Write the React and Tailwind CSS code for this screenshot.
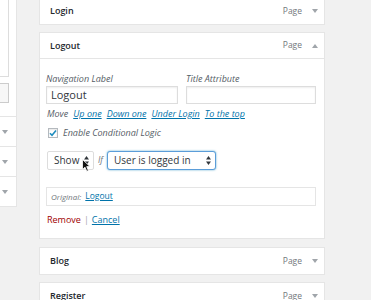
import React from "react";

const font = { fontFamily: '"Open Sans", "Liberation Sans", sans-serif' };

function Down({ className = "" }) {
  return (
    <svg width="6" height="4" viewBox="0 0 6 4" className={className}>
      <polygon points="0,0 6,0 3,4" fill="#a0a5aa" />
    </svg>
  );
}
function Up({ className = "" }) {
  return (
    <svg width="6" height="4" viewBox="0 0 6 4" className={className}>
      <polygon points="0,4 6,4 3,0" fill="#a0a5aa" />
    </svg>
  );
}
function UpDown() {
  return (
    <svg width="5" height="9" viewBox="0 0 5 9">
      <polygon points="0,3.5 5,3.5 2.5,0" fill="#32373c" />
      <polygon points="0,5.5 5,5.5 2.5,9" fill="#32373c" />
    </svg>
  );
}

function Header({ title, open = false }) {
  return (
    <div className={`h-[26px] flex items-center justify-between pl-[10px] pr-[6px] ${open ? "border-b border-[#e5e5e5]" : ""}`}>
      <span className="text-[9px] font-semibold text-[#23282d]">{title}</span>
      <span className="flex items-center gap-[10px]">
        <span className="text-[8.5px] text-[#72777c]">Page</span>
        {open ? <Up /> : <Down />}
      </span>
    </div>
  );
}

function Card({ title, className = "" }) {
  return (
    <div className={`bg-white border border-[#e5e5e5] ${className}`}>
      <Header title={title} />
    </div>
  );
}

export default function App() {
  return (
    <div className="w-[371px] h-[300px] overflow-hidden bg-[#f1f1f1] flex items-start" style={font}>
      {/* left panel */}
      <div className="w-[17px] h-[207px] bg-white border-r border-b border-[#e5e5e5] flex flex-col shrink-0">
        <div className="w-[9px] h-[77px] border-r border-b border-[#dddddd]" />
        <div className="w-[9px] h-[20px] mt-[6px] border-r border-t border-b border-[#cccccc] bg-[#f7f7f7]" />
        <div className="h-[14px] border-b border-[#e5e5e5]" />
        <div className="h-[30px] border-b border-[#e5e5e5] flex items-center pl-[2px]"><Down /></div>
        <div className="h-[30px] border-b border-[#e5e5e5] flex items-center pl-[2px]"><Down /></div>
        <div className="flex-1 flex items-center pl-[2px]"><Down /></div>
      </div>

      {/* cards */}
      <div className="ml-[22px] w-[286px] flex flex-col gap-[7px] mt-[-3px]">
        <Card title="Login" />

        <div className="bg-white border border-[#e5e5e5] relative">
          <Header title="Logout" open />
          <div className="pl-[6px] pr-[8px] pt-[14px] pb-[12px] flex flex-col">
            <div className="flex gap-[8px]">
              <div className="w-[132px] flex flex-col">
                <span className="text-[9px] italic text-[#555d66] leading-[12px]">Navigation Label</span>
                <div className="mt-[1px] h-[18px] border border-[#dddddd] shadow-[inset_0_1px_2px_rgba(0,0,0,0.07)] flex items-center pl-[4px] text-[11px] text-[#32373c]">
                  Logout
                </div>
              </div>
              <div className="flex-1 flex flex-col">
                <span className="text-[9px] italic text-[#555d66] leading-[12px]">Title Attribute</span>
                <div className="mt-[1px] h-[18px] border border-[#dddddd] shadow-[inset_0_1px_2px_rgba(0,0,0,0.07)]" />
              </div>
            </div>

            <div className="mt-[4px] h-[12px] flex items-center gap-[5px] text-[9px] italic leading-[12px] pl-[1px]">
              <span className="text-[#555d66]">Move</span>
              <span className="text-[#0073aa] underline">Up one</span>
              <span className="text-[#0073aa] underline">Down one</span>
              <span className="text-[#0073aa] underline">Under Login</span>
              <span className="text-[#0073aa] underline">To the top</span>
            </div>

            <div className="mt-[7px] h-[12px] flex items-center gap-[5px] pl-[2px]">
              <div className="w-[10px] h-[10px] border border-[#b4b9be] bg-white shadow-[inset_0_1px_2px_rgba(0,0,0,0.1)] flex items-center justify-center">
                <svg width="8" height="8" viewBox="0 0 8 8">
                  <path d="M1 4.2 L3 6.2 L7 1.5" stroke="#1e8cbe" strokeWidth="1.6" fill="none" />
                </svg>
              </div>
              <span className="text-[9px] italic text-[#555d66]">Enable Conditional Logic</span>
            </div>

            <div className="mt-[12px] flex items-center pl-[1px]">
              <div className="w-[47px] h-[19px] border border-[#dddddd] bg-white rounded-[2px] flex items-center justify-between pl-[6px] pr-[4px] text-[10px] text-[#32373c]">
                <span>Show</span>
                <UpDown />
              </div>
              <span className="ml-[4px] text-[8.5px] italic text-[#72777c]">If</span>
              <div className="ml-[4px] w-[109px] h-[19px] border border-[#5b9dd9] rounded-[3px] shadow-[0_0_2px_rgba(30,140,190,0.8)] bg-white flex items-center justify-between pl-[6px] pr-[4px] text-[10px] text-[#32373c]">
                <span>User is logged in</span>
                <UpDown />
              </div>
            </div>

            <div className="mt-[17px] h-[19px] border border-[#e5e5e5] flex items-center gap-[4px] pl-[4px]">
              <span className="text-[8px] italic text-[#72777c]">Original:</span>
              <span className="text-[8.5px] text-[#0073aa] underline">Logout</span>
            </div>

            <div className="mt-[8px] h-[12px] flex items-center gap-[3px] text-[9px] pl-[1px]">
              <span className="text-[#a00000]">Remove</span>
              <span className="text-[#a0a5aa]">|</span>
              <span className="text-[#0073aa] underline">Cancel</span>
            </div>
          </div>

          {/* mouse cursor */}
          <svg className="absolute left-[42px] top-[126px]" width="9" height="13" viewBox="0 0 9 13">
            <path d="M0.5 0.5 L0.5 10.5 L3 8.2 L4.8 12.3 L6.4 11.6 L4.7 7.6 L8 7.6 Z" fill="#111" stroke="#fff" strokeWidth="0.8" />
          </svg>
        </div>

        <Card title="Blog" className="mt-[1px]" />
        <Card title="Register" />
      </div>
    </div>
  );
}
